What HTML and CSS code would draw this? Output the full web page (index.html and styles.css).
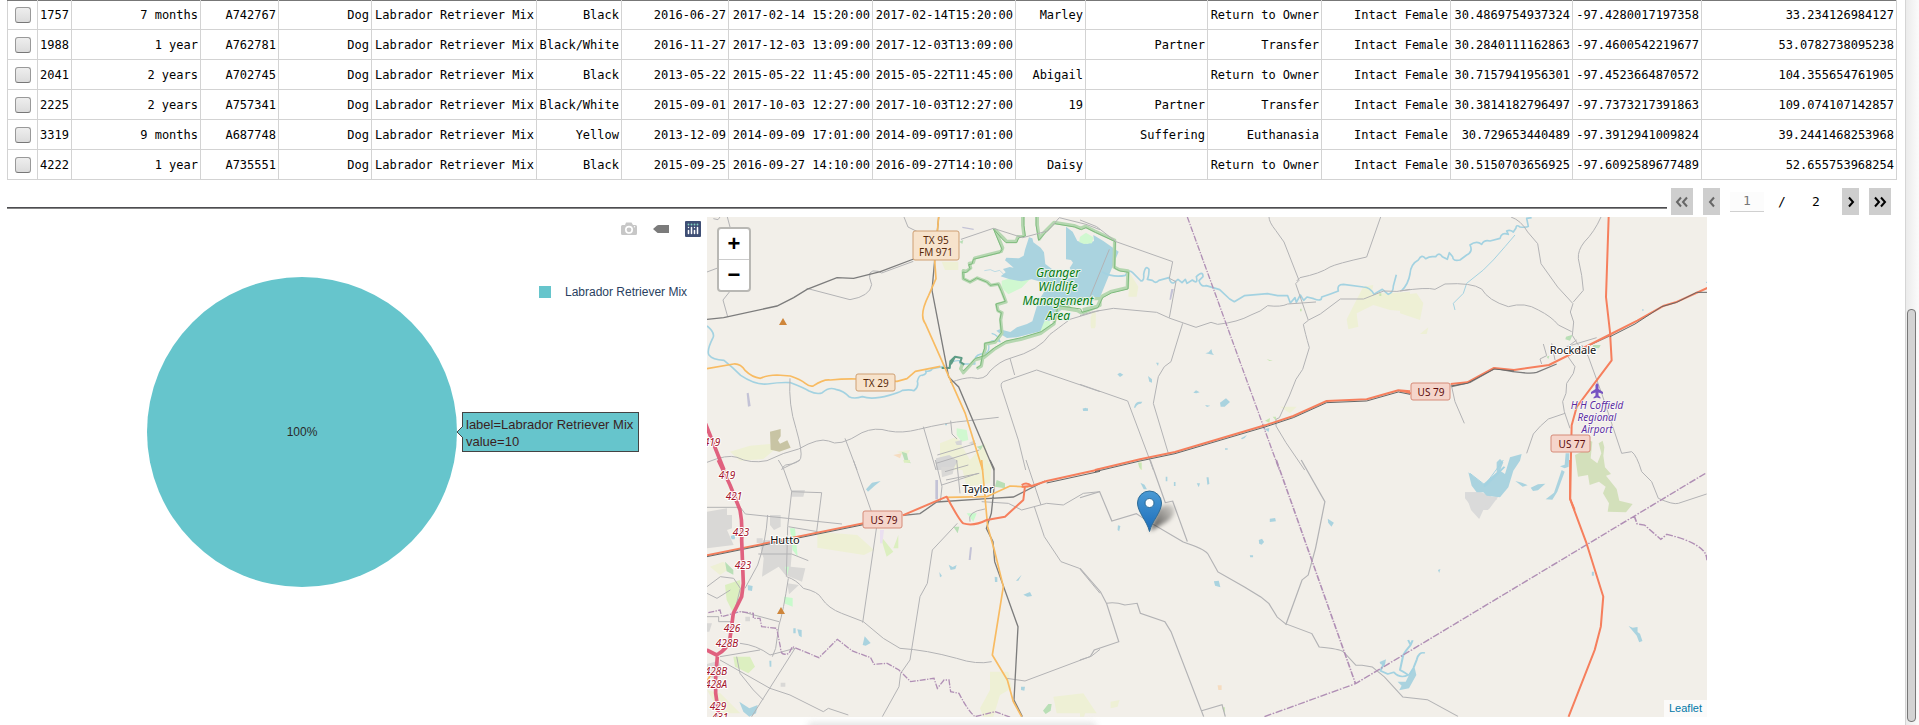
FILE: index.html
```html
<!DOCTYPE html>
<html lang="en">
<head>
<meta charset="utf-8">
<title>Animal outcomes dashboard</title>
<link rel="stylesheet" href="styles.css">
</head>
<body>
<div class="page">
<main class="content">
<table class="grid">
<colgroup><col class="c-pick"><col class="c-id"><col class="c-sex"><col class="c-animal"><col class="c-type"><col class="c-breed"><col class="c-color"><col class="c-birth"><col class="c-date"><col class="c-month"><col class="c-name"><col class="c-sub"><col class="c-outcome"><col class="c-sex"><col class="c-sub"><col class="c-sex"><col></colgroup>
<tbody>
<tr><td class="pick"><input type="checkbox" aria-label="Select 1757"></td><td>1757</td><td>7 months</td><td>A742767</td><td>Dog</td><td>Labrador Retriever Mix</td><td>Black</td><td>2016-06-27</td><td>2017-02-14 15:20:00</td><td>2017-02-14T15:20:00</td><td>Marley</td><td></td><td>Return to Owner</td><td>Intact Female</td><td>30.4869754937324</td><td>-97.4280017197358</td><td>33.234126984127</td></tr>
<tr><td class="pick"><input type="checkbox" aria-label="Select 1988"></td><td>1988</td><td>1 year</td><td>A762781</td><td>Dog</td><td>Labrador Retriever Mix</td><td>Black/White</td><td>2016-11-27</td><td>2017-12-03 13:09:00</td><td>2017-12-03T13:09:00</td><td></td><td>Partner</td><td>Transfer</td><td>Intact Female</td><td>30.2840111162863</td><td>-97.4600542219677</td><td>53.0782738095238</td></tr>
<tr><td class="pick"><input type="checkbox" aria-label="Select 2041"></td><td>2041</td><td>2 years</td><td>A702745</td><td>Dog</td><td>Labrador Retriever Mix</td><td>Black</td><td>2013-05-22</td><td>2015-05-22 11:45:00</td><td>2015-05-22T11:45:00</td><td>Abigail</td><td></td><td>Return to Owner</td><td>Intact Female</td><td>30.7157941956301</td><td>-97.4523664870572</td><td>104.355654761905</td></tr>
<tr><td class="pick"><input type="checkbox" aria-label="Select 2225"></td><td>2225</td><td>2 years</td><td>A757341</td><td>Dog</td><td>Labrador Retriever Mix</td><td>Black/White</td><td>2015-09-01</td><td>2017-10-03 12:27:00</td><td>2017-10-03T12:27:00</td><td>19</td><td>Partner</td><td>Transfer</td><td>Intact Female</td><td>30.3814182796497</td><td>-97.7373217391863</td><td>109.074107142857</td></tr>
<tr><td class="pick"><input type="checkbox" aria-label="Select 3319"></td><td>3319</td><td>9 months</td><td>A687748</td><td>Dog</td><td>Labrador Retriever Mix</td><td>Yellow</td><td>2013-12-09</td><td>2014-09-09 17:01:00</td><td>2014-09-09T17:01:00</td><td></td><td>Suffering</td><td>Euthanasia</td><td>Intact Female</td><td>30.729653440489</td><td>-97.3912941009824</td><td>39.2441468253968</td></tr>
<tr><td class="pick"><input type="checkbox" aria-label="Select 4222"></td><td>4222</td><td>1 year</td><td>A735551</td><td>Dog</td><td>Labrador Retriever Mix</td><td>Black</td><td>2015-09-25</td><td>2016-09-27 14:10:00</td><td>2016-09-27T14:10:00</td><td>Daisy</td><td></td><td>Return to Owner</td><td>Intact Female</td><td>30.5150703656925</td><td>-97.6092589677489</td><td>52.655753968254</td></tr>
</tbody>
</table>

<div class="divider">
<hr class="rule">
<nav class="pager" aria-label="Pages">
<button class="pager-btn wide" disabled aria-label="First page"><svg width="14" height="12" viewBox="0 0 14 12"><path d="M6 1.500 2 6l4 4.500M12 1.500 8 6l4 4.500"/></svg></button>
<button class="pager-btn" disabled aria-label="Previous page"><svg width="8" height="12" viewBox="0 0 8 12"><path d="M6 1.500 2 6l4 4.500"/></svg></button>
<input class="pager-input" type="text" aria-label="Current page" value="1">
<span class="pager-sep">/</span>
<span class="pager-last">2</span>
<button class="pager-btn" aria-label="Next page"><svg width="8" height="12" viewBox="0 0 8 12"><path d="M2 1.500 6 6l-4 4.500"/></svg></button>
<button class="pager-btn wide" aria-label="Last page"><svg width="14" height="12" viewBox="0 0 14 12"><path d="M2 1.500 6 6l-4 4.500M8 1.500 12 6l-4 4.500"/></svg></button>
</nav>
</div>

<div class="panels">
<section class="chart">
<div class="modebar">
<button aria-label="Download plot as a png"><svg width="16" height="16" viewBox="0 0 16 16"><path fill="#c7c7c7" fill-rule="evenodd" d="M5 1.500h5.500L12 4h2.500Q16 4 16 5.500v7q0 1.500-1.500 1.500h-13Q0 14 0 12.500v-7Q0 4 1.500 4H4zM8 4.800a4 4 0 1 0 0 8 4 4 0 0 0 0-8zm0 1.600a2.400 2.400 0 1 1 0 4.800 2.400 2.400 0 0 1 0-4.800z"/><circle cx="13.500" cy="5.700" r=".7" fill="#fff"/></svg></button>
<button aria-label="Toggle show closest data on hover"><svg width="16" height="16" viewBox="0 0 16 16"><path fill="#7b7b7b" d="M0 8l4-3.500Q4.500 4 5.500 4H16v8H5.500Q4.500 12 4 11.500z"/></svg></button>
<button aria-label="Produced with Plotly"><svg width="16" height="16" viewBox="0 0 16 16"><rect width="16" height="16" rx="1" fill="#3f4f75"/><path stroke="#fff" stroke-width="1.500" stroke-linecap="round" d="M3.500 9.500v3M6.500 6.500v6M9.500 9.500v3M12.500 6.500v6"/><g fill="#80cfbe"><circle cx="3.500" cy="3.500" r=".9"/><circle cx="6.500" cy="3.500" r=".9"/><circle cx="9.500" cy="3.500" r=".9"/><circle cx="12.500" cy="3.500" r=".9"/></g><g fill="#fff"><circle cx="3.500" cy="6.500" r=".7"/><circle cx="9.500" cy="6.500" r=".7"/></g></svg></button>
</div>
<div class="plot">
<div class="pie">100%<div class="hover"><svg class="hover-tip" width="7" height="14" viewBox="0 0 7 14"><path fill="#66c5cc" stroke="#444" d="M7 1 1 7l6 6"/></svg>label=Labrador Retriever Mix<br>value=10</div></div>
<div class="legend"><span class="swatch"></span>Labrador Retriever Mix</div>
</div>
</section>

<section class="map">
<svg class="tiles" viewBox="0 0 1000 500" preserveAspectRatio="xMidYMid slice" role="img" aria-label="Map around Taylor, Texas">
<defs><filter id="soft" x="-50%" y="-50%" width="200%" height="200%"><feGaussianBlur stdDeviation="2"/></filter>
<linearGradient id="shade" x1="0" y1="1" x2="1" y2="0"><stop offset="0" stop-opacity=".7"/><stop offset="1" stop-opacity=".1"/></linearGradient>
<linearGradient id="pin" x1="0" y1="0" x2="0" y2="1"><stop offset="0" stop-color="#4a9ad4"/><stop offset="1" stop-color="#1c6cba"/></linearGradient></defs>
<rect width="1000" height="500" fill="#f2efe9"/>

<!-- fields and built-up areas -->
<g transform="translate(-7 -7) scale(.33333)">
<g fill="#eef0d5"><path d="M725 155h50v25h-40zM90 725l60-18 60-5 10 20-30 25-70 5zM590 725l40-5-10 20zM720 700l50-20 40 70 45-50 15 80H720zM1172 320l15-10v40h-15z"/></g>
<path fill="#c8c4a4" d="M210 665l32-8v22l-8 12 6 10 22-10 10 22-34 12-26-6z"/>
<g fill="#b9dfb6"><path d="M605 725l15 5 5 20 8 10-18-5zM778 95l12-5-3 12zM830 710l20-5-8 15z"/></g>
<g fill="#d0f8d0"><path d="M770 655l30 5 5 30-20 5-15-20zM905 212l40-12 45 8-25 25-40 20-20-20zM1020 340l28-10 5 20-25 18-15-5z"/></g>
<path fill="#d5d5d5" d="M708 745l40-10 25 18-15 27h-50zM765 695l20-5v15h-15zM805 700l20-10v14z"/>
<path fill="#f6dcc0" d="M580 735l25-5-5 15z"/>
<path fill="#c3c2d6" d="M787 50l34 6v4l-34-6zM140 550l6-2 6 40-8 2z"/>
</g>
<g transform="translate(-7 243) scale(.33333)">
<g fill="#d9d8d6"><path d="M21 155l60-10v20h15v40l-15 5 20 45-80 10zM210 165h32v35l-20 10-12-15zM275 90h40l-5 20h-35zM190 240h90l-5 45-3 35 44 5-10 40-50-20-20-25-50 30 5-55-10-30zM262 370l35 5-30 28zM723 20l40 0-5 22-32 10zM21 612l35-10 15 40-25 15-25-10zM21 490h15l-8 25h-7zM136 470h14v14h-14zM242 668h14v12h-14zM170 235h18v14h-18z"/></g>
<g fill="#eef0d5"><path d="M352 215l120 10 50 45-30 15-140-22zM870 635l55 0 10 50-35 20-20 65h-30l-10-25 30-55zM785 20l90-10-5 60-70 10zM30 320l40-15 20 20-30 20zM1060 710l90-10 40 60-120 0zM21 690l40 10 60 60h-60z"/></g>
<g fill="#dcefc0"><path d="M75 375l45-15 5 60-25 40-20-40zM540 225l40 50-20 15zM580 265l15-40v40zM100 590l50 0 15 30-20 20-40-20zM610 0h20v8h-18z"/></g>
<g fill="#c8facc"><path d="M252 410l26 4v26l-26-10zM270 205l15 0 8 85-15-20zM255 320l12 0-5 25zM800 160l30 0-10 25z"/></g>
<g fill="#b9dfb6"><path d="M75 305l25 25v14l-20-10zM890 60l25 10 0 15-30-5zM1045 732l10 0-3 20-15 10-8-10zM760 200l18 0-5 20z"/></g>
<path fill="#c3c2d6" d="M706 60h8v58h-8zM810 262h6l-4 38h-6z"/>
<path fill="#eadff0" d="M540 210l12 0-5 40-7 0z"/>
</g>
<g transform="translate(373 -7) scale(.33333)">
<g fill="#eef0d5"><path d="M150 190l25 40-5 30-25 0zM35 305l12 0-2 50-12 0zM850 230l30-5-5 25 50 0 65-5v60l-60-5-50-15-50 25 5 40-30 8-5-30 25-50zM600 590l50 0-20 20zM175 755l10-3 2 28h-8z"/></g>
<g fill="#c8e6b4"><path d="M560 447l18 6-10 0zM555 632l15-8-2 14zM578 620h10v12zM660 296h5v8h-5zM898 250h6v8h-6z"/></g>
<path fill="#c3c2d6" d="M274 237h7l-8 32h-5z"/>
</g>
<g transform="translate(693 -7) scale(.33333)">
<path fill="#eef0d5" d="M0 255l50-5 20 30-10 50-60-20zM60 372l25-20-5 20z"/>
<path fill="#d3e0bb" d="M525 735l20-10 10-40 22 10-5 50 20 15 12-30-8-30 12-8 5 20-3 25 5 35 18 20-15 5 32 40 8 35 40 10-20 25-55-2 4-25-18-30 8-20-20-15-28 10-5-30-30 5z"/>
<path fill="#b9dfb6" d="M498 380l20-6-8 18-14-4zM580 405l22 0-5 10-20-2zM440 440l8-3-3 10z"/>
<path fill="#dadada" d="M195 847h45l20 17 38-8-30 40-5 4h-40l-28-35z"/>
</g>
<g transform="translate(373 243) scale(.40816 .33333)">
<path fill="#dadada" d="M943 97h40l40 20-30 20-15 40-20-27z"/>
<path fill="#eef0d5" d="M0 745l15 5-5 20H0zM75 725l22-5-5 20-17 5z"/>
<path fill="#f6dcc0" d="M337 676l10 0v14h-8z"/>
<path fill="#c8e6b4" d="M142 8l9 0v22l-6-8zM348 742l7 0v20z"/>
</g>

<!-- water bodies -->
<g fill="#aad3df">
<g transform="translate(-7 -7) scale(.33333)"><path d="M987 82l10 3 3 12 22 16 10 14 4 35 20 15 10 18 20 12 25-2 8-15-10-16 10-16-6-8-15-2V50l20 15 14 28 30 8 20-8-2-18 30 18 46 32-58 142-20 0-20 0-20 12-30 10-30 15-10 26-35 4-12 30-70 18-30 2-20-12-12-10 10-4 32 8 20-14 30-10 16-8 18-60 12-20 10-16-12-22-30-8-30 6-36-6-27-9 15-12-8-10 20-6 12 2-26-22 4-8 38 2 14-8 4-18zM1148 596l10-3 6 9-14 1zM735 641h6v5h-6z"/><path fill="#d0f8d0" d="M1140 80l18-12 22 14-4 18-24 2-15-6z"/></g>
<g transform="translate(373 -7) scale(.33333)"><path d="M112 493l8-5 10 6-10 7zM204 498l12 10v10l-8-3zM228 458h8l-2 10zM376 430l10-3 8-10 3 12 5 6zM340 548l8-7 11 6-10 3zM420 578l18-13 12 11-16 14h-12zM375 585l16 2-10 4zM483 685l18-10-7 9-8 4zM8 596l16-1v7H10zM553 657l15-3-2 12zM435 715h8v4h-8z"/><path d="M162 592c4-12 6-18 25-17l-4 6c-10-1-14 6-18 14z"/></g>
<g transform="translate(693 -7) scale(.33333)"><path d="M205 787l45 35 40-35 0-30 10-10 10 10-10 25 15 10 15-50 35-10-5 20-20 30-15 50-25 30-40-5-10-10-20 0-15-20zM346 813l20 5 17 8-15 4zM392 833l22-10 22-2-22 20-15 2zM497 730h11l-2 40-12 5-14-6 14-5zM485 780l9 5-22 60-15 24-20-1 25-20z"/><path d="M726 298h5v4h-5z"/></g>
<g transform="translate(-7 243) scale(.33333)"><path d="M498 88l18-20 26-5-18 14-20 18zM746 314l12 7 12-6-4 12-14 3zM970 404l20-8 6 12-14 2zM884 350l8 2v14h-7zM118 725l30 20 25-10-5 25-20 10-18-15zM488 555l6-26 18 20-15 8zM280 505h7v15h-7zM292 508l13 2v22l-8-5zM143 375l15 3-2 15-12-2zM92 228l15-5-3 15h-9zM963 680l12 0-2 12-10-2zM948 362l17-18-10 18zM718 336l8 12-6 4zM208 602h6v18h-5z"/></g>
<g transform="translate(373 243) scale(.40816 .33333)"><path d="M210 50h4v14h-4zM230 66h4v12h-4zM286 70l8 0-3 12zM310 52h5l2 20-5 2zM148 68l10 6 6 14-8 0zM93 196l6 2-3 16-4-4zM465 176l13-2 2 10-15 2zM438 240l8-4 5 10-6 8-6-3zM416 286h8v6h-7zM328 364l12-2 4 20-13-5zM607 176l15 12-6 12-8-12zM877 330l6-3-3 12zM734 606l16-8-4 20-10-6zM1344 498l10 5 12-2 0 15 6 5 6 22-8 4-6-20zM1254 335h5v12h-5zM778 665l20 0 12-30 10-12 4 22-18 40-24 6 6-14z"/></g>
</g>

<!-- rivers -->
<g fill="none" stroke="#a3d2e1" stroke-linejoin="round">
<g transform="translate(-7 -7) scale(.33333)" stroke-width="5"><path d="M21 348q25 20 18 35-20 40-12 52 10 14 45 16 25 20 50 45 45 30 80 26 40-6 70-4 40 15 55 25 25 12 40 5 20-18 40-10 25 5 40 22 15 8 40 0 30 10 80-4 30-8 40-15 25-3 35 1 15-12 10-28 5-20 15-18 15-5 10-13 15 3 20-7l40-8"/><path stroke-width="4" d="M725 472l25 2q0-25 30-22-5 15 15 10 20 0 30 0-5-25 18-30 30 0 22-32 15-15 35-5-5-20-25-25"/><path stroke-width="2" d="M853 182l18-3 14 6 14-4 12 12 10 4"/></g>
<g transform="translate(373 -7) scale(.33333)"><path stroke-width="5" d="M66 186q35 18 70 10 10-20 22-8 15 15 25 25 10 0 8-20 5-30 16-15 0 20-5 30l15 3q10 12 20 0l30-8q5 20 15 15l12-10 12 10 10-10 5 12 16-10q18 15 12-10 20-20 20 0l-12 12q5 20 22 15l40 12 30 28 14 8 30-18 70-6 30 6 30 0 8 22 14-16 4 14 12-22 10 16 10-10 20 5q25 10 24-5 25-8 50-18-5-20 15-20l60 8q20 0 32 22l25-15 18 15q15-5 15-25l9-34"/></g>
<g transform="translate(693 -7) scale(.33333)"><path stroke-width="5" d="M5 242q20-20 25-50 2-30 25-42 10-20 22-4 10-6 20-6l10 0q10-15 20 0l15 8 6-20 10 12q0 15 22 10l20-15q20-10 10-30 20-15 35-2 8-15 25-10l30-8q5-20 25-12l-5-10q10-5 20 3l8-12q0-12 12-3 20 2 25-2l-5-24 15-2"/><path stroke-width="3" d="M345 75l-30 35-35 40-30 30-50 40-10 30-30 30 5 20M210 790l45 35 55-75M918 218l5-3"/></g>
<g transform="translate(373 243) scale(.40816 .33333)" stroke-width="5"><path d="M804 540l6 15 5-14M810 555l-10 15-8 15-8 45q15 10 20 15-20 12-35-8l-15 5-18-10 10-25M845 579q-15-5-20 20l-8 25-10 20M990 80l50-60"/></g>
</g>

<!-- nature reserve outline -->
<g transform="translate(-7 -7) scale(.33333)" fill="none" stroke-linejoin="round">
<g stroke="#b5d7b0" stroke-width="10"><path d="M968 21l0 25 4 30-18 4-6 14-28 0-10-10-24-24 22 54-4 10-80 20-4 14-12 2 4 14-12 10-10-2 0 24 20 10 22-12 30 12 10 10 24-4 10 22 12 32-28 8 4 18 12 6-4 22 4 40-20 26-30 6 0 14-6 18-6 34-14 8"/><path d="M1012 21l0 24 6 42 14-20 30-30 60 10 20 8 14-6 28 14 60 28-2 80 16 8 26 4-2 50-50 12-26 14-14 30-44 10M1146 310l-14-8-60-10-10 50-40 28-60 18-46 10-34 20-30 24-28 8-14 16-20 22-8-12 6-14M1146 310l54-24 0-20-54 0-60 30"/></g>
<g stroke="#7dbb7c" stroke-width="3"><path d="M972 21l0 25 4 32-20 6-6 14-32 0-12-12-26-30 26 62-6 10-80 20-4 14-10 2 4 12-12 12-10-2 2 20 20 10 20-12 30 12 10 10 24-4 10 22 12 30-28 8 4 20 12 6-4 20 4 40-20 26-30 6 0 14-6 18-6 34-12 8"/><path d="M1008 21l0 24 8 46 18-20 30-30 60 10 20 8 14-6 28 14 60 28-2 80 16 8 26 4-2 50-50 12-26 14-14 30-48 14-4-10-68-10-10 50-40 28-60 18-46 10-34 20-30 24-28 8-14 16-22 22"/></g>
<path stroke="#5e9c85" stroke-width="6" d="M725 474h24l2-20 14-14 20 4-4 12 12 8M765 440l-12 22"/>
</g>

<!-- minor roads -->
<g fill="none" stroke="#b3b3b5" stroke-width="3">
<g transform="translate(-7 -7) scale(.33333)"><path d="M21 186l32-12M40 26l14 3 6-8M82 21l8 30M89 245l-20 25 14 50M612 21l12 30 30 15M320 235l130 34q60-10 65-45-20-50 20-40l10 5 95-35M783 88l97-33 88 28 75-20 35-40 80 20 42 16M270 505q-5 80 18 150 20 70 14 90-5 15-45 20-10 5-12 15M21 757q60-25 90-15 40 20 90 10 50-25 95-35 60-35 90-24 30 20 100-25 40-18 80-5 40 8 90-5 80-20 150-26l90-10M435 685l36 95M670 650l38 130M752 632l4 40 15 15M712 735l100-30 15-5M708 760l130-40M750 518q40-15 65-15 40 10 55-20 30-30 60-38 90-25 120-72 20-15 60-45l90-27M930 445l14 50M1200 545l-190-65-100 35q-10 5-5 20l50 155 22 90"/></g>
<g transform="translate(-7 243) scale(.33333)"><path d="M235 0l15 25 50-25M250 25l25 70-12 105-4 150M275 95l90 3-15 117M203 165q-5 80-30 150l-38 70M21 142l100 0 15 20 290 30M265 200l88 15M460 0l70 200-42 288M175 282l100 0 50 20M260 350q30 10 50 35 45 10 55 30 20 30 60 45l65 25 60 50 50 30q80 5 170 30 60 20 105 10M547 770l50-90 5-40 28-40 30-190 22-40 15-100 75-80M265 355q-15 100-28 140l-10 70-10 25M125 455l112 30M60 600l150 85 60 20 100 50 15-10 60 20M120 550q50 5 90 35l75-20M285 565l-130 205M110 590l10 50 40 50 30 30M60 590l120-20M21 380l40-30 40 5 20 30-15 60M21 400l30 15 40-25M21 470l35 0 0 15 45 0M706 0l20 80-5 45M725 75l110-35M735 35l70-20M738 60l100-20M780 100l-10-100M978 0l45 135M1200 95l-50 5-60 35-50-5-75 20-40-20-80-5M1003 140l30 90 50 75 55 20 62 75M1200 568l-25 20-200 75-55-8M810 185q-10-30 45-38"/></g>
<g transform="translate(373 -7) scale(.33333)"><path d="M0 30l50 20 58 45 170 60-10 50 20 10-20 108M88 118l-58 142M0 317l40-12 60-10 130 12 40 18 78 27 45-15 20 6q60-6 100-28 30-10 50-28 40 5 60-5l85-6M567 21q0 15 20 40l25 35 45 115-10 10 38 110-15 12q5 25 18 70l-20 65-20 30-20 50-30 65-10 5 0 20 30 50 56 82M902 21l-42 120q-90 20-110 30-30 20-90 32l-10 10M686 330l35-18 60-45 70 0 60-24q40 5 79-5M308 340l-35 115-20 15-18 30-15 80 45 150M0 523l143 50 62 165 15 42"/></g>
<g transform="translate(693 -7) scale(.33333)"><path d="M0 243q80-12 105-5l30-16q80-5 110 15 20 35 80 53 50-15 90 10 40 20 60 45l40 20M333 21q30 10 50 45l30 35 10 60 50 70 46 50-8 25 10 30-4 40 25 40M603 21q-20 45-50 75-20 25-18 50l10 50 5 45-30 35M430 402l10 35-20 10 5 15M455 400l10 50M530 390l-40 30 35 50-5 20-20 30-2 30-10 25 5 30 17 50M495 610l-50 17q-25 20-45 45l-20 58M155 530l10 45 28 65M500 410l90-27M545 405l20 35 40 110 60 180 30-5q15 10 30 60l30 30 20 50q45 20 60 15l85-28"/></g>
<g transform="translate(373 243) scale(.40816 .33333)"><path d="M0 113l48-18 30 88 60-22 25 20 90 65q50 20 60 35l25 55 65 45 40 30 20 20 20 40 20 20 65 30 18 40q50 5 60 15l30 40 15 0 25 5 30 30 45 60 60 8 75 50M172 0l37 128 18-5 36 122M542 0l58 125-18 110-5 30-18 80-15 15-40 135M0 325l50 70 15 35q20-5 45 5l30-5 8 30 60 25 15 30 80 255M65 430l30 115-60 25-10 20-25 10M298 752l50-18 8 36"/></g>
</g>

<!-- county lines -->
<g fill="none" stroke="#b08fb5" stroke-width="4" stroke-dasharray="18 4 4 4">
<path transform="translate(373 -7) scale(.33333)" d="M322 21l276 759"/>
<path transform="translate(373 243) scale(.40816 .33333)" d="M481 0l194 671M452 770l223-99 860-633M1358 168l7 24 18 3 40 43 15-15q100 30 98 78"/>
<path transform="translate(-7 243) scale(.33333)" d="M25 458l35-8 5 20 55-15 40 5 0 15 20 0 5 25 45 5 12 60q0 25 25 15l10-20 80 33 55-55 45 35 55 20 10 20 40-3 35 20 35 35 70-10 10 30 20-25 15 0 5 35 25 5q25 50 48 70l60-15 50 18"/>
</g>

<!-- railways -->
<g fill="none" stroke="#7c7c7c" stroke-width="4">
<path transform="translate(-7 -7) scale(.33333)" d="M21 328l50-5 160-35 50-25 40-25 90-35 50 2 80-20 100-38M716 21l-12 130-8 90 50 260 30 30 106 250"/>
<path transform="translate(-7 243) scale(.33333)" d="M870 0l12 25 0 60-8 75-15 45 20 40 5 60 70 195-12 220 25 50M610 166l50-5 50-35 150-10 80-5 95-48"/>
<path transform="translate(693 -7) scale(.33333)" d="M155 530l55-13 75-42q100 20 125 12l60-25M570 405l60-28"/>
</g>

<!-- trunk roads -->
<g fill="none" stroke-linejoin="round">
<g stroke="#f8bb62" stroke-width="5"><path transform="translate(-7 -7) scale(.33333)" d="M716 21l-12 130 4 55-22 50q-30 60-10 85l120 270 52 169M21 476l80-14q20-2 35 20 20 20 45 23 20-10 50-10l40 3q30 10 45 22 15 12 25 7 30-20 50-17 40-4 80-3l120 7 30-8 25-22 75-15"/>
<path transform="translate(-7 243) scale(.33333)" d="M845 0l18 200 20 70 27 110-33 205 45 75 18 65 25 45M740 112l120-2 70-32 55 3M21 662l20-30"/></g>
<g stroke="#f67f5d" stroke-width="6">
<path transform="translate(-7 243) scale(.33333)" d="M21 286l470-96M608 166l132-56q40 75 50 80 30 10 70-10l55-10 55-50 5-42M965 80l30-2 45-15 160-35M965 75q15-10 30 3"/>
<path transform="translate(373 -7) scale(.33333)" d="M45 780l135-32 105-22 270-80 85-28 100-45 120-5 95-27 35 3"/>
<path transform="translate(693 -7) scale(.33333)" d="M0 543q15 0 35 8M152 522l50-5 80-43 60 6 105-15 100-50 80-40 85-43 80-45 35-10 95-43"/>
<path transform="translate(693 -7) scale(.33333)" d="M626 21l-8 240 12 105 5 85-45 60-60 80-15 55-5 220 14 34"/>
<path transform="translate(373 243) scale(.40816 .33333)" stroke-width="5" d="M1201 0l0 118 40 132 41 160-6 90-15 70-64 200"/></g>
<g stroke="#666" stroke-width="3">
<path transform="translate(-7 243) scale(.33333)" d="M21 290l470-96M1040 69l160-35"/>
<path transform="translate(373 -7) scale(.33333)" d="M45 785l135-32 105-22 270-80 85-28 100-45 120-5 95-27 35 7"/>
<path transform="translate(693 -7) scale(.33333)" d="M152 528l50-8 80-43 60 6M630 380l75-38 80-52 45-13 60-30h31"/></g>
<g stroke="#e0617f" stroke-width="11"><path transform="translate(-7 -7) scale(.33333)" d="M10 625l62 155"/><path transform="translate(-7 243) scale(.33333)" d="M55 0l35 75 30 75q8 40 5 90l5 130-5 40-25 50-10 75q-5 30-40 50l-30-15M52 590l-5 60 0 50 10 70"/></g>
</g>

<!-- highway shields -->
<g class="shield"><g fill="#f7e3cc" stroke="#cf9f73"><rect x="206" y="14" width="46" height="29" rx="2"/><rect x="149" y="157" width="39" height="17" rx="2"/></g>
<g fill="#f5d5cb" stroke="#d68b78"><rect x="156" y="294" width="39" height="17" rx="2"/><rect x="704" y="166" width="39" height="17" rx="2"/><rect x="844" y="218" width="39" height="17" rx="2"/></g>
<g class="state"><text x="229" y="27">TX 95</text><text x="229" y="39">FM 971</text><text x="169" y="170">TX 29</text></g>
<text x="177" y="307">US 79</text><text x="724" y="179">US 79</text><text x="865" y="231">US 77</text></g>

<g class="town"><text x="271" y="276">Taylor</text><text x="78" y="327">Hutto</text><text x="866" y="137">Rockdale</text></g>
<g class="reserve"><text x="351" y="60">Granger</text><text x="351" y="74">Wildlife</text><text x="351" y="88">Management</text><text x="351" y="103">Area</text></g>
<g class="airport"><text x="890" y="192">H H Coffield</text><text x="890" y="204">Regional</text><text x="890" y="216">Airport</text></g>
<path fill="#7753c2" d="M890 166l1.500 2v4l4.500 3v2l-4.500-1.500v3l2 2v1l-3.500-1-3.500 1v-1l2-2v-3l-4.500 1.500v-2l4.500-3v-4z"/>
<g class="exit"><text x="5" y="229">419</text><text x="20" y="262">419</text><text x="27" y="283">421</text><text x="34" y="319">423</text><text x="36" y="352">423</text><text x="25" y="415">426</text><text x="20" y="430">428B</text><text x="9" y="458">428B</text><text x="9" y="471">428A</text><text x="11" y="493">429</text><text x="13" y="504">431</text></g>
<path fill="#cf863b" d="M76 101l4 7h-8zM74 390l4 7h-8z"/>

<!-- location marker -->
<path fill="url(#shade)" d="M443 314l8-22q10-8 16-2 2 8-6 14z" filter="url(#soft)"/>
<path fill="url(#pin)" stroke="#2e6c97" d="M442.500 314.500C440 304 430.500 295 430.500 286a12 12 0 0 1 24 0C454.500 295 445 304 442.500 314.500z"/>
<circle cx="442.500" cy="286" r="4.500" fill="#fff" stroke="#2e6c97"/>
</svg>
<div class="zoom"><button aria-label="Zoom in">+</button><button aria-label="Zoom out">−</button></div>
<a class="credit" href="#leaflet">Leaflet</a>
</section>
</div>
<div class="dock-shadow"></div>
</main>
<div class="scroll-track"><div class="scroll-thumb"></div></div>
</div>
</body>
</html>
```
FILE: styles.css
```css
* { box-sizing: border-box; }
body { margin: 0; background: #fff; font-family: "Liberation Sans", Arial, sans-serif; }
button { margin: 0; padding: 0; border: 0; background: none; }
.page { display: grid; grid-template-columns: minmax(0, 1fr) 14px; height: 100vh; overflow: hidden; }
.content { position: relative; min-width: 0; padding: 0 8px 0 7px; overflow: hidden; }

.grid { width: 100%; table-layout: fixed; border-collapse: collapse; font: 12px/16px "DejaVu Sans Mono", monospace; color: #000; }
.grid td { height: 30px; padding: 0 2px; border: 1px solid #d3d3d3; text-align: right; white-space: nowrap; }
.grid tr:first-child td { height: 29px; border-top-color: #777; }
.grid .pick { padding: 0; text-align: center; }
.c-pick { width: 30px; }
.c-id { width: 34px; }
.c-sex { width: 129px; }
.c-animal { width: 78px; }
.c-type { width: 93px; }
.c-breed { width: 165px; }
.c-color { width: 85px; }
.c-birth { width: 107px; }
.c-date { width: 144px; }
.c-month { width: 143px; }
.c-name { width: 70px; }
.c-sub { width: 122px; }
.c-outcome { width: 114px; }
.pick input { appearance: none; display: block; width: 16px; height: 16px; margin: 0 auto; border: 1px solid #999; border-bottom-color: #777; border-radius: 3px; background: linear-gradient(#eee, #dcdcdc); }

.divider { display: flex; align-items: center; gap: 4px; height: 37px; padding: 8px 6px 2px 0; }
.rule { flex: 1; align-self: flex-end; margin: 0 0 6px; height: 2px; border: 0; border-top: 1px solid #4c4c50; background: #858585; }
.pager { display: flex; align-items: center; gap: 10px; font: 13px/20px "DejaVu Sans Mono", monospace; }
.pager-btn { display: grid; place-items: center; width: 17px; height: 27px; background: #cecece; }
.pager-btn.wide { width: 22px; }
.pager-btn svg { fill: none; stroke: #000; stroke-width: 2; }
.pager-btn:disabled svg { stroke: #666; }
.pager-input { width: 34px; height: 20px; padding: 0; border: 0; border-bottom: 1px solid #d0d0d0; background: #fcfcfc; color: #777; font: inherit; text-align: center; }
.pager-sep { width: 16px; text-align: center; }
.pager-last { width: 32px; text-align: center; }

.panels { display: flex; align-items: flex-start; }
.chart { flex: 0 1 700px; color: #444; font-size: 12px; }
.modebar { display: flex; justify-content: flex-end; gap: 16px; padding: 4px 6px 0 0; }
.modebar button { display: block; height: 16px; }
.modebar svg { display: block; }
.plot { display: flex; gap: 82px; padding: 40px 0 0 140px; }
.pie { position: relative; display: grid; place-items: center; flex: none; width: 310px; aspect-ratio: 1; border-radius: 50%; background: #66c5cc; color: #2a2a2a; }
.legend { display: flex; align-items: center; gap: 14px; height: 30px; white-space: nowrap; color: #2a3f5f; }
.swatch { width: 12px; height: 12px; background: #66c5cc; }
.hover { position: absolute; left: 315px; top: 135px; padding: 3px 5px 1px 3px; border: 1px solid #444; background: #66c5cc; color: #3b1f1f; font-size: 13px; line-height: 17px; white-space: nowrap; }
.hover-tip { position: absolute; left: -7px; top: 12px; }

.map { position: relative; flex: 0 1 1000px; min-width: 0; }
.tiles { display: block; width: 100%; aspect-ratio: 2; }
.tiles text { font-family: "Noto Sans", sans-serif; font-size: 10px; text-anchor: middle; paint-order: stroke; stroke-linejoin: round; }
.shield text { fill: #5b0a0a; }
.shield .state text { fill: #57290a; }
.town text { fill: #111; stroke: #fff; stroke-width: 2px; font-size: 11px; }
.reserve text { fill: #077a12; stroke: #e8f4ec; stroke-width: 2px; font-size: 12px; font-style: italic; }
.airport text { fill: #5a2ca0; stroke: #fff; stroke-width: 1px; font-style: italic; }
.exit text { fill: #a3152a; stroke: #fff; stroke-width: 2px; font-style: italic; }
.zoom { position: absolute; left: 10px; top: 10px; width: 34px; border: 2px solid #b9b8b4; border-radius: 4px; background: #fff; }
.zoom button { display: block; width: 30px; height: 30px; font: bold 22px/30px "Liberation Sans", Arial, sans-serif; color: #000; }
.zoom button:first-child { height: 31px; border-bottom: 1px solid #ccc; }
.credit { position: absolute; right: 0; bottom: 0; padding: 0 5px; background: rgba(255, 255, 255, .7); color: #0078a8; font-size: 11px; line-height: 17px; text-decoration: none; }
.dock-shadow { width: 290px; height: 12px; margin: 5px auto 0; border-radius: 6px; background: #e6e6e6; filter: blur(3px); }

.scroll-track { display: flex; align-items: flex-end; padding: 0 2px 3px 1px; border-left: 1px solid #d5d5d5; background: linear-gradient(90deg, #ebebeb, #fbfbfb); }
.scroll-thumb { width: 9px; height: 57vh; border: 1px solid #777; border-radius: 4px; background: #d3d3d3; }
```
